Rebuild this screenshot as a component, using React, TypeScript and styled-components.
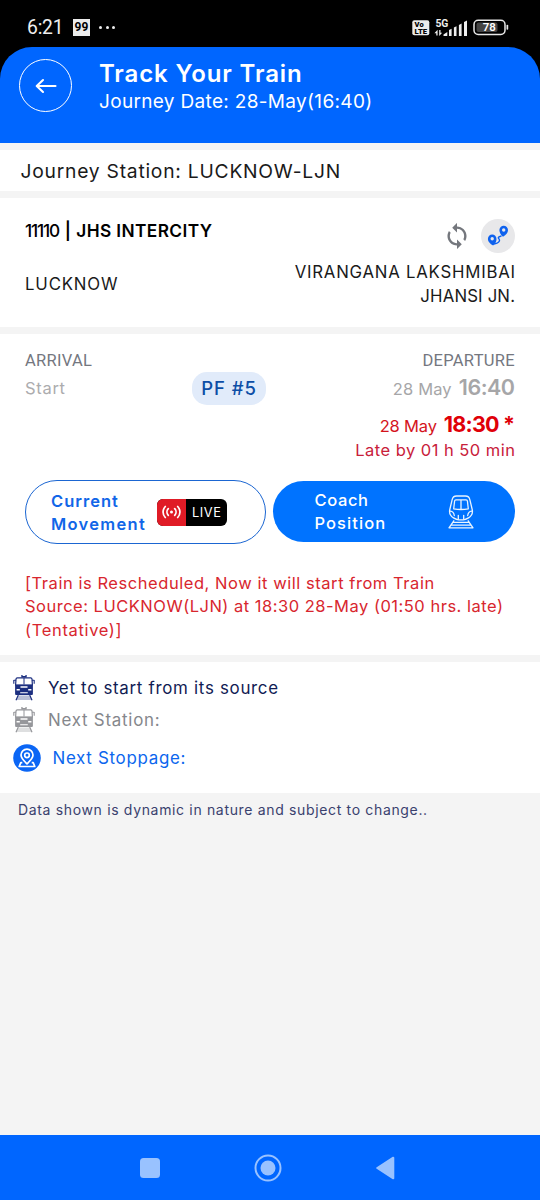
import React from "react";
import styled, { createGlobalStyle } from "styled-components";

const GlobalStyle = createGlobalStyle`
  * { box-sizing: border-box; }
  body { margin: 0; background: #f4f4f4; font-family: Inter, "Noto Sans", sans-serif; }
  svg { display: block; flex: none; }
`;

const Screen = styled.div`
  display: flex;
  flex-direction: column;
  width: 540px;
  height: 1200px;
  background: #f4f4f4;
`;

const Text = styled.div<{ $size: number; $line: number; $color?: string; $weight?: number; $gap?: number; $end?: boolean }>`
  font-size: ${(p) => p.$size}px;
  line-height: ${(p) => p.$line}px;
  color: ${(p) => p.$color ?? "#1a1a1a"};
  font-weight: ${(p) => p.$weight ?? 400};
  letter-spacing: ${(p) => p.$gap ?? 0}px;
  margin-right: ${(p) => (p.$end ? -(p.$gap ?? 0) : 0)}px;
  text-align: ${(p) => (p.$end ? "right" : "left")};
  white-space: nowrap;
`;

const StatusBar = styled.div`
  display: flex;
  align-items: center;
  height: 47px;
  padding: 8px 31px 0 27px;
  background: #000;
  color: #eee;
  font-family: Roboto, sans-serif;
`;

const StatusIcons = styled.div`
  display: flex;
  align-items: center;
  gap: 4px;
`;

const Clock = styled.span`
  width: 46px;
  font-size: 19.3px;
  line-height: 22px;
  letter-spacing: -0.2px;
`;

const CountBadge = styled.span`
  width: 17px;
  height: 17px;
  background: #ececec;
  color: #000;
  font-size: 12px;
  font-weight: 700;
  line-height: 17px;
  text-align: center;
`;

const Dots = styled.span`
  display: flex;
  gap: 3.5px;
  margin: 0 auto 0 9px;
  i { width: 3px; height: 3px; border-radius: 50%; background: #eee; }
`;

const HeaderBack = styled.div`
  background: #000;
`;

const Header = styled.header`
  display: flex;
  height: 96px;
  padding: 12px 19px;
  background: #0066ff;
  border-radius: 32px 32px 0 0;
`;

const BackButton = styled.button`
  display: flex;
  align-items: center;
  justify-content: center;
  width: 53px;
  height: 53px;
  padding: 0;
  border: 1.5px solid #fff;
  border-radius: 50%;
  background: none;
`;

const Titles = styled.div`
  margin: 1px 0 0 27px;
`;

const Panel = styled.section<{ $height: number; $pad: string }>`
  height: ${(p) => p.$height}px;
  padding: ${(p) => p.$pad};
  margin-top: 7px;
  background: #fff;
`;

const Split = styled.div<{ $top?: number }>`
  display: flex;
  justify-content: space-between;
  align-items: flex-start;
  margin-top: ${(p) => p.$top ?? 0}px;
`;

const TrainName = styled.div`
  display: flex;
  gap: 6px;
`;

const Tools = styled.div`
  display: flex;
  align-items: center;
  gap: 11px;
`;

const RouteButton = styled.button`
  display: flex;
  align-items: center;
  justify-content: center;
  width: 34px;
  height: 34px;
  padding: 0;
  border: 0;
  border-radius: 50%;
  background: #e8e8ea;
`;

const Times = styled.div`
  display: grid;
  grid-template-columns: 167px 74px 1fr;
  align-items: start;
`;

const Heading = styled.div<{ $end?: boolean }>`
  font: 400 16.5px/24px Roboto, sans-serif;
  letter-spacing: 0.3px;
  color: #74777f;
  text-align: ${(p) => (p.$end ? "right" : "left")};
`;

const Platform = styled.div`
  display: flex;
  justify-content: center;
  height: 33px;
  margin-top: 23px;
  border-radius: 15px;
  background: #e1ebfa;
`;

const TimeLine = styled.div<{ $top: number }>`
  display: flex;
  justify-content: flex-end;
  align-items: baseline;
  gap: 7px;
  height: 26px;
  margin-top: ${(p) => p.$top}px;
`;

const Actions = styled.div`
  display: flex;
  gap: 7px;
  margin-top: 17px;
`;

const Action = styled.button<{ $filled?: boolean }>`
  display: flex;
  align-items: center;
  width: 242px;
  height: ${(p) => (p.$filled ? 61 : 64)}px;
  margin-top: ${(p) => (p.$filled ? 1 : 0)}px;
  padding: 0 0 0 ${(p) => (p.$filled ? 41 : 25)}px;
  border: ${(p) => (p.$filled ? "0" : "1.4px solid #1b66d2")};
  border-radius: 32px;
  background: ${(p) => (p.$filled ? "#0073ff" : "#fff")};
  font-family: inherit;
`;

const ActionLabel = styled.div<{ $width: number }>`
  width: ${(p) => p.$width}px;
  padding-top: 1px;
`;

const LiveBadge = styled.div`
  display: flex;
  width: 70px;
  height: 27px;
  border-radius: 6px;
  overflow: hidden;
  background: #000;
`;

const LiveSignal = styled.div`
  display: flex;
  align-items: center;
  justify-content: center;
  width: 29px;
  margin-right: 6px;
  background: #e01b26;
`;

const Notice = styled.div`
  margin-top: 28px;
`;

const StatusRow = styled.div<{ $height: number; $gap: number }>`
  display: flex;
  align-items: center;
  gap: ${(p) => p.$gap}px;
  height: ${(p) => p.$height}px;
`;

const Footnote = styled.div`
  flex: 1;
  padding: 7px 18px;
`;

const NavBar = styled.nav`
  display: flex;
  align-items: center;
  gap: 94px;
  height: 65px;
  padding-left: 139.5px;
  background: #0066ff;
`;

const NavSquare = styled.div`
  width: 20px;
  height: 20px;
  border-radius: 3.5px;
  background: #99c2ff;
`;

const BackArrow = () => (
  <svg width="22" height="16" viewBox="0 0 22 16" fill="none" stroke="#fff" strokeWidth="2.1" strokeLinecap="round" strokeLinejoin="round">
    <path d="M20.500 8H2M8 2L1.700 8L8 14" />
  </svg>
);

const VolteIcon = () => (
  <svg width="18" height="16" viewBox="0 0 18 16">
    <rect x="0.3" y="0.3" width="17" height="15" rx="2" fill="#ececec" />
    <text x="2.600" y="7.200" fontFamily="Roboto" fontSize="7" fontWeight="900" fill="#000" textLength="9" lengthAdjust="spacingAndGlyphs">Vo</text>
    <text x="2.600" y="13.800" fontFamily="Roboto" fontSize="7.600" fontWeight="900" fill="#000" textLength="12.500" lengthAdjust="spacingAndGlyphs">LTE</text>
  </svg>
);

const SignalIcon = () => (
  <svg width="35" height="18" viewBox="0 0 35 18" fill="#eee">
    <text x="1.400" y="7.800" fontFamily="Roboto" fontSize="10" fontWeight="700" textLength="13" lengthAdjust="spacingAndGlyphs">5G</text>
    <path d="M3.600 16.500v-5.700L.4 14.300h1.900v2.200zM5.200 11h1.300v2.800h1.700L5.200 17z" />
    <path d="M9.500 17v-1.500l3.800-2.600V17z" />
    <path d="M15 17v-6l2.600-1.200V17zM19.900 17V8.600l2.600-1.400V17zM24.900 17V5.900l2.700-1.400V17zM30 17V3l3-1.500V17z" />
  </svg>
);

const BatteryIcon = () => (
  <svg width="36" height="17" viewBox="0 0 36 17">
    <rect x="1" y="1.200" width="31" height="14.200" rx="4.200" fill="none" stroke="#e8e8e8" strokeWidth="1.500" />
    <rect x="3.500" y="3.600" width="21" height="9.500" rx="2" fill="#444" />
    <rect x="33.500" y="5.800" width="1.700" height="5" rx="0.800" fill="#e8e8e8" />
    <text x="16.300" y="12.300" textAnchor="middle" fontFamily="Roboto" fontSize="11.400" fontWeight="600" fill="#fff">78</text>
  </svg>
);

const RefreshIcon = () => (
  <svg width="26" height="26" viewBox="0 0 24 24" fill="#74777d">
    <path d="M12 4V1L8 5l4 4V6c3.310 0 6 2.690 6 6 0 1.010-.250 1.970-.700 2.800l1.460 1.460C19.540 15.030 20 13.570 20 12c0-4.420-3.580-8-8-8zm0 14c-3.310 0-6-2.690-6-6 0-1.010.250-1.970.700-2.800L5.240 7.740C4.460 8.970 4 10.430 4 12c0 4.420 3.580 8 8 8v3l4-4-4-4v3z" transform="translate(-1.200 -1.200) scale(1.100)" />
  </svg>
);

const RouteIcon = () => (
  <svg width="22" height="22" viewBox="0 0 22 22">
    <path d="M14.500 10.800l-2.700 1.200c-1.800 1 1.600 2 .6 4-.9 1.800-3.300 2.700-5.900 3.100" fill="none" stroke="#0f62ee" strokeWidth="1.400" />
    <path fillRule="evenodd" fill="#0f62ee" d="M16.700.8a4.300 4.300 0 0 1 4.300 4.300c0 2.700-2 4.900-5 6.700-2.400-2-3.600-4.200-3.600-6.700A4.300 4.300 0 0 1 16.700.8zm0 2.500a1.700 1.700 0 1 0 0 3.400 1.700 1.700 0 0 0 0-3.400z" />
    <path fillRule="evenodd" fill="#0f62ee" d="M5.200 9.600a4.300 4.300 0 0 1 4.300 4.300c0 2.300-1 4.500-3.400 6.600-3-1.800-5.200-4-5.200-6.600a4.300 4.300 0 0 1 4.300-4.300zm0 2.500a1.700 1.700 0 1 0 0 3.400 1.700 1.700 0 0 0 0-3.400z" />
  </svg>
);

const SignalWaves = () => (
  <svg width="19" height="14" viewBox="0 0 19 14" fill="none" stroke="#fff" strokeWidth="1.700" strokeLinecap="round">
    <circle cx="9.500" cy="7" r="1.500" fill="#fff" stroke="none" />
    <path d="M6.300 3.700c-1.800 1.900-1.800 4.700 0 6.600M12.700 3.700c1.800 1.900 1.800 4.700 0 6.600M3.300 1.500c-3 3.200-3 7.800 0 11M15.700 1.500c3 3.200 3 7.800 0 11" />
  </svg>
);

const MetroIcon = () => (
  <svg width="26" height="34" viewBox="0 0 26 34" fill="none" stroke="#e9f4ff" strokeWidth="1.300" strokeLinecap="round" strokeLinejoin="round">
    <path d="M8.500 1h9c2.700 0 3.900 1.400 4.400 3.800l2.300 9.700c.8 3.500-.4 6.300-3.700 8.400-1.900 1.200-3.600 1.900-5.200 1.900h-4.600c-1.600 0-3.300-.7-5.200-1.900-3.300-2.100-4.500-4.900-3.700-8.400l2.300-9.700C4.600 2.400 5.800 1 8.500 1z" />
    <path d="M7.900 4.800h10.200c.8 0 1.200.4 1.300 1.200l.9 7.800c-4.800.9-9.800.9-14.600 0l.9-7.800c.1-.8.500-1.200 1.300-1.200zM13 4.800v9.300" />
    <path d="M2.300 16.200c2.600.3 3.600 1.500 4 4.300M23.700 16.200c-2.600.3-3.600 1.500-4 4.300M10.300 20.300v4M15.700 20.300v4" />
    <path d="M5.800 25.800L1 32.800h24l-4.800-7M5.200 27.300h15.600M3.300 30.200h19.400" />
  </svg>
);

const LocoIcon = ({ color, light }: { color: string; light: string }) => (
  <svg width="22" height="26" viewBox="0 0 22 26">
    <path d="M8.300 0h1.300v1h2.800V0h1.300v2.600H8.300z" fill={color} />
    <path d="M5.500 20.500h11l2.300 4.500H3.200z" fill={light} />
    <path d="M5.300 20L3 25.300M16.700 20l2.300 5.300" stroke={color} strokeWidth="1.200" />
    <path d="M4.300 2.900h13.400c.8 0 1.200.4 1.300 1.200l.4 5.900H2.600L3 4.100c.1-.8.500-1.200 1.300-1.200z" fill="#fff" stroke={color} strokeWidth="1.200" />
    <path d="M11 3v6.500" stroke={color} strokeWidth="1" />
    <path d="M.8 5.100v3.600M21.200 5.100v3.600M.8 5.300H3M19 5.300h2.200" stroke={color} strokeWidth="1.100" />
    <path d="M2.100 9.700h17.800v9.100c0 .8-.5 1.300-1.300 1.300H3.400c-.8 0-1.300-.5-1.300-1.300z" fill={color} />
    <path d="M7.500 11.200h7v1.500h-7zM3.600 14h3.200v1.500H3.600zM15.200 14h3.200v1.500h-3.200zM7.200 17.200h7.600v1H7.200z" fill="#fff" />
  </svg>
);

const StopIcon = () => (
  <svg width="28" height="28" viewBox="0 0 28 28" fill="none" stroke="#fff" strokeWidth="1.700" strokeLinejoin="round">
    <circle cx="14" cy="14" r="13.800" fill="#0b66f5" stroke="none" />
    <path d="M14 19.800c-4-3.600-6-5.900-6-8.700a6 6 0 0 1 12 0c0 2.800-2 5.100-6 8.700z" />
    <circle cx="14" cy="11.300" r="2.300" />
    <path d="M9.300 18.700H7.800L6.200 22.500h15.600l-1.600-3.800h-1.500" />
  </svg>
);

const HomeIcon = () => (
  <svg width="28" height="28" viewBox="0 0 28 28">
    <circle cx="14" cy="14" r="12.500" fill="none" stroke="#99c2ff" strokeWidth="2" />
    <circle cx="14" cy="14" r="7.500" fill="#99c2ff" />
  </svg>
);

const NavBack = () => (
  <svg width="20" height="24" viewBox="0 0 20 24" fill="#99c2ff" stroke="#99c2ff" strokeWidth="2" strokeLinejoin="round">
    <path d="M1.200 12L17.300 1.700v20.600z" />
  </svg>
);

export default function App() {
  return (
    <Screen>
      <GlobalStyle />
      <StatusBar>
        <Clock>6:21</Clock>
        <CountBadge>99</CountBadge>
        <Dots><i /><i /><i /></Dots>
        <StatusIcons>
          <VolteIcon />
          <SignalIcon />
          <BatteryIcon />
        </StatusIcons>
      </StatusBar>

      <HeaderBack>
        <Header>
          <BackButton aria-label="Back"><BackArrow /></BackButton>
          <Titles>
            <Text $size={24} $line={28} $weight={600} $gap={0.88} $color="#fff">Track Your Train</Text>
            <Text $size={19} $line={28} $gap={0.33} $color="#fff">Journey Date: 28-May(16:40)</Text>
          </Titles>
        </Header>
      </HeaderBack>

      <Panel $height={41} $pad="8px 20.5px">
        <Text $size={19.3} $line={26} $gap={0.75}>Journey Station: LUCKNOW-LJN</Text>
      </Panel>

      <Panel $height={129} $pad="21px 25px">
        <Split>
          <TrainName>
            <Text $size={17.3} $line={24} $weight={500} $gap={-1.2} $color="#000">11110</Text>
            <Text $size={17.3} $line={24} $weight={600} $gap={0.4} $color="#000">| JHS INTERCITY</Text>
          </TrainName>
          <Tools>
            <RefreshIcon />
            <RouteButton aria-label="Route"><RouteIcon /></RouteButton>
          </Tools>
        </Split>
        <Split $top={7}>
          <Text $size={16.8} $line={48} $gap={0.83}>LUCKNOW</Text>
          <div>
            <Text $size={16.8} $line={24} $gap={0.76} $end>VIRANGANA LAKSHMIBAI</Text>
            <Text $size={16.8} $line={24} $gap={0.15} $end>JHANSI JN.</Text>
          </div>
        </Split>
      </Panel>

      <Panel $height={321} $pad="15px 25px">
        <Times>
          <div>
            <Heading>ARRIVAL</Heading>
            <Text $size={16.5} $line={31} $gap={0.7} $color="#acacae">Start</Text>
          </div>
          <Platform>
            <Text $size={18.5} $line={33} $weight={500} $gap={0.9} $color="#0d4ea6">PF #5</Text>
          </Platform>
          <div>
            <Heading $end>DEPARTURE</Heading>
            <TimeLine $top={1}>
              <Text $size={16.5} $line={26} $gap={0.15} $color="#a6a6a8">28 May</Text>
              <Text $size={21.5} $line={26} $weight={600} $gap={-0.5} $color="#a6a6a8" $end>16:40</Text>
            </TimeLine>
            <TimeLine $top={11}>
              <Text $size={16.5} $line={26} $gap={-0.15} $color="#d4141c">28 May</Text>
              <Text $size={21.5} $line={26} $weight={700} $gap={-0.8} $color="#e00008" $end>18:30 *</Text>
            </TimeLine>
            <Text $size={16.5} $line={26} $gap={0.47} $color="#c8203a" $end>Late by 01 h 50 min</Text>
          </div>
        </Times>

        <Actions>
          <Action>
            <ActionLabel $width={106}>
              <Text $size={16.5} $line={23} $weight={600} $gap={1} $color="#1166e8">Current</Text>
              <Text $size={16.5} $line={23} $weight={600} $gap={1.3} $color="#1166e8">Movement</Text>
            </ActionLabel>
            <LiveBadge>
              <LiveSignal><SignalWaves /></LiveSignal>
              <Text $size={12.8} $line={28} $gap={0.6} $color="#fff">LIVE</Text>
            </LiveBadge>
          </Action>
          <Action $filled>
            <ActionLabel $width={134}>
              <Text $size={16.5} $line={23} $weight={500} $gap={0.6} $color="#fff">Coach</Text>
              <Text $size={16.5} $line={23} $weight={500} $gap={1.08} $color="#fff">Position</Text>
            </ActionLabel>
            <MetroIcon />
          </Action>
        </Actions>

        <Notice>
          <Text $size={16.5} $line={23.3} $gap={0.55} $color="#d8262e">[Train is Rescheduled, Now it will start from Train</Text>
          <Text $size={16.5} $line={23.3} $gap={0.5} $color="#d8262e">Source: LUCKNOW(LJN) at 18:30 28-May (01:50 hrs. late)</Text>
          <Text $size={16.5} $line={23.3} $gap={0.66} $color="#d8262e">(Tentative)]</Text>
        </Notice>
      </Panel>

      <Panel $height={131} $pad="10px 13px">
        <StatusRow $height={32} $gap={13}>
          <LocoIcon color="#1c2f80" light="#b9bfd6" />
          <Text $size={16.9} $line={32} $gap={0.7} $color="#111c54">Yet to start from its source</Text>
        </StatusRow>
        <StatusRow $height={32} $gap={13}>
          <LocoIcon color="#96979b" light="#dedfe0" />
          <Text $size={16.9} $line={32} $gap={0.76} $color="#85878c">Next Station:</Text>
        </StatusRow>
        <StatusRow $height={44} $gap={11.5}>
          <StopIcon />
          <Text $size={16.9} $line={44} $gap={0.7} $color="#0b66ee">Next Stoppage:</Text>
        </StatusRow>
      </Panel>

      <Footnote>
        <Text $size={14} $line={20} $gap={0.66} $color="#3a416e">Data shown is dynamic in nature and subject to change..</Text>
      </Footnote>

      <NavBar>
        <NavSquare />
        <HomeIcon />
        <NavBack />
      </NavBar>
    </Screen>
  );
}
